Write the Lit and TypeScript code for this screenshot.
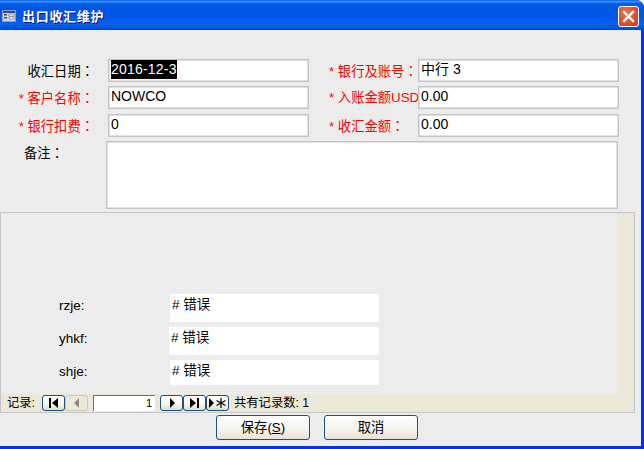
import { LitElement, html, css } from "lit";
import { customElement } from "lit/decorators.js";

@customElement("app-root")
export class AppRoot extends LitElement {
  static styles = css`
    :host { display: block; width: 644px; height: 449px; overflow: hidden; font-family: "Liberation Sans", "Noto Sans CJK SC", sans-serif; font-size: 13px; color: #000; }
    * { box-sizing: border-box; }
    .win { width: 644px; height: 449px; display: flex; flex-direction: column; background: #0831d9; border-radius: 0 8px 0 0; overflow: hidden; }
    .title { height: 30px; flex: none; display: flex; align-items: center; padding: 0 5px 0 2px;
      background: linear-gradient(180deg, #0058ee 0%, #3a93ff 5%, #0a5fe6 12%, #0055e5 30%, #0258e8 60%, #0560f0 80%, #0050d8 95%, #0040c0 100%); }
    .ticon { width: 14px; height: 12px; flex: none; margin-top: 2px; display: block; }
    .ttext { margin-left: 6px; margin-top: 1px; color: #fff; font-weight: 700; font-size: 13px; text-shadow: 1px 1px 0 #0f1089; flex: 1; letter-spacing: 0.7px; }
    .close { width: 21px; height: 21px; margin-top: 3px; border: 1px solid #fff; border-radius: 3px; background: radial-gradient(circle at 40% 35%, #e8775a 0%, #d9532f 55%, #b93a1a 100%); display: flex; align-items: center; justify-content: center; }
    .close svg { width: 13px; height: 13px; display: block; }
    .main { flex: 1; margin: 0 3px 3px 0; background: #ececec; display: flex; flex-direction: column; }
    .form { padding: 29px 0 0 0; display: grid; grid-template-columns: 108px 201px 20px 89px 201px; grid-template-rows: 27px 28px 27px; height: 111px; }
    .lab { font-size: 13.3px; line-height: 23px; white-space: nowrap; }
    .lab.l { text-align: right; padding-right: 14px; }
    .red { color: #f00; }
    .colon { font-family: "Noto Sans CJK TC", sans-serif; }
    .in { height: 23px; background: #fff; border: 1px solid #c4c4c4; box-shadow: inset 0 0 0 0.5px #c4c4c4; padding: 0 2px; font-size: 14px; line-height: 19px; white-space: nowrap; }
    .sel { background: #000; color: #fff; display: inline-block; line-height: 19px; letter-spacing: 0.2px; }
    .notes { display: flex; height: 71px; }
    .nlab { width: 106px; padding: 1px 0 0 24px; font-size: 13.3px; line-height: 22px; }
    .nbox { width: 512px; height: 68px; background: #fff; border: 1px solid #c4c4c4; box-shadow: inset 0 0 0 0.5px #c4c4c4; }
    .panel { width: 635px; height: 201px; border: 1px solid #c4c4c4; background: #ebe8d8; display: flex; flex-direction: column; }
    .detail { width: 616px; height: 181px; background: #ececec; padding-top: 81px; display: grid; grid-template-columns: 169px 210px; grid-template-rows: 33px 33px 25px; }
    .dl { font-size: 13.5px; padding-left: 58px; line-height: 24px; }
    .dv { background: #fff; height: 28px; width: 209px; font-size: 13.5px; padding: 2px 0 0 2px; line-height: 18px; white-space: nowrap; }
    .dv.b { margin-left: -1px; width: 210px; }
    .dv.c { height: 25px; }
    .nav { height: 18px; display: flex; align-items: flex-start; padding: 1px 0 0 6px; font-size: 12.3px; }
    .nt { line-height: 16px; }
    .nt.rec { width: 35px; }
    .nt.total { margin-left: 5px; }
    .nb { width: 23px; height: 16px; border: 1px solid #1c4f82; border-radius: 3px; background: linear-gradient(180deg, #fff 0%, #f6f5ee 60%, #dedbcc 100%); display: flex; align-items: center; justify-content: center; flex: none; }
    .nb svg { display: block; }
    .nb.dis { border-color: #ccc9b8; background: #ece9d8; }
    .nin { width: 62px; height: 16px; background: #fff; border-top: 1px solid #716f64; border-left: 1px solid #716f64; text-align: right; padding-right: 3px; line-height: 15px; font-size: 11px; margin: 0 5px 0 5px; flex: none; }
    .act { height: 32px; display: flex; padding: 2px 0 0 216px; gap: 14px; }
    .btn { width: 94px; height: 25px; border: 1px solid #1c5180; border-radius: 3px; background: linear-gradient(180deg, #fff 0%, #f5f4ee 55%, #e6e3d6 100%); text-align: center; font-size: 13.3px; line-height: 23px; }
    u { text-underline-offset: 1px; }
  `;

  render() {
    const c = html`<span class="colon">：</span>`;
    return html`<div class="win">
      <div class="title">
        <svg class="ticon" viewBox="0 0 14 12">
          <rect x="0.5" y="0.5" width="13" height="11" fill="#d4d8e4" stroke="#8f9bb8"/>
          <rect x="1" y="1" width="12" height="2" fill="#2a4a9a"/>
          <rect x="2" y="4" width="3" height="1.5" fill="#444"/><rect x="2" y="7" width="3" height="1.5" fill="#444"/>
          <rect x="7" y="4" width="5" height="2" fill="#fff" stroke="#555" stroke-width="0.5"/>
          <rect x="7" y="7" width="5" height="2" fill="#fff" stroke="#555" stroke-width="0.5"/>
        </svg>
        <div class="ttext">出口收汇维护</div>
        <div class="close"><svg viewBox="0 0 13 13"><path d="M2 2L11 11M11 2L2 11" stroke="#fff" stroke-width="2.4" stroke-linecap="square"/></svg></div>
      </div>
      <div class="main">
        <div class="form">
          <div class="lab l">收汇日期${c}</div>
          <div class="in"><span class="sel">2016-12-3</span></div>
          <div></div>
          <div class="lab red">* 银行及账号${c}</div>
          <div class="in">中行 3</div>

          <div class="lab l red">* 客户名称${c}</div>
          <div class="in">NOWCO</div>
          <div></div>
          <div class="lab red">* 入账金额USD</div>
          <div class="in">0.00</div>

          <div class="lab l red">* 银行扣费${c}</div>
          <div class="in">0</div>
          <div></div>
          <div class="lab red">* 收汇金额${c}</div>
          <div class="in">0.00</div>
        </div>
        <div class="notes">
          <div class="nlab">备注${c}</div>
          <div class="nbox"></div>
        </div>
        <div class="panel">
          <div class="detail">
            <div class="dl">rzje:</div><div class="dv"># 错误</div>
            <div class="dl">yhkf:</div><div class="dv b"># 错误</div>
            <div class="dl">shje:</div><div class="dv c"># 错误</div>
          </div>
          <div class="nav">
            <span class="nt rec">记录:</span>
            <div class="nb"><svg width="11" height="10" viewBox="0 0 11 10"><path d="M1 0h2v10H1zM10 0v10L4 5z" fill="#000"/></svg></div>
            <div class="nb dis"><svg width="8" height="10" viewBox="0 0 8 10"><path d="M6 0v10L1 5z" fill="#8a887a"/></svg></div>
            <div class="nin">1</div>
            <div class="nb"><svg width="8" height="10" viewBox="0 0 8 10"><path d="M2 0v10l5-5z" fill="#000"/></svg></div>
            <div class="nb"><svg width="11" height="10" viewBox="0 0 11 10"><path d="M1 0v10l6-5zM8 0h2v10H8z" fill="#000"/></svg></div>
            <div class="nb"><svg width="19" height="10" viewBox="0 0 19 10"><path d="M1 0v10l5-5z" fill="#000"/><path d="M13 0v10M8.5 2.5l9 5M17.5 2.5l-9 5" stroke="#000" stroke-width="1.2"/></svg></div>
            <span class="nt total">共有记录数: 1</span>
          </div>
        </div>
        <div class="act">
          <div class="btn">保存(<u>S</u>)</div>
          <div class="btn">取消</div>
        </div>
      </div>
    </div>`;
  }
}
